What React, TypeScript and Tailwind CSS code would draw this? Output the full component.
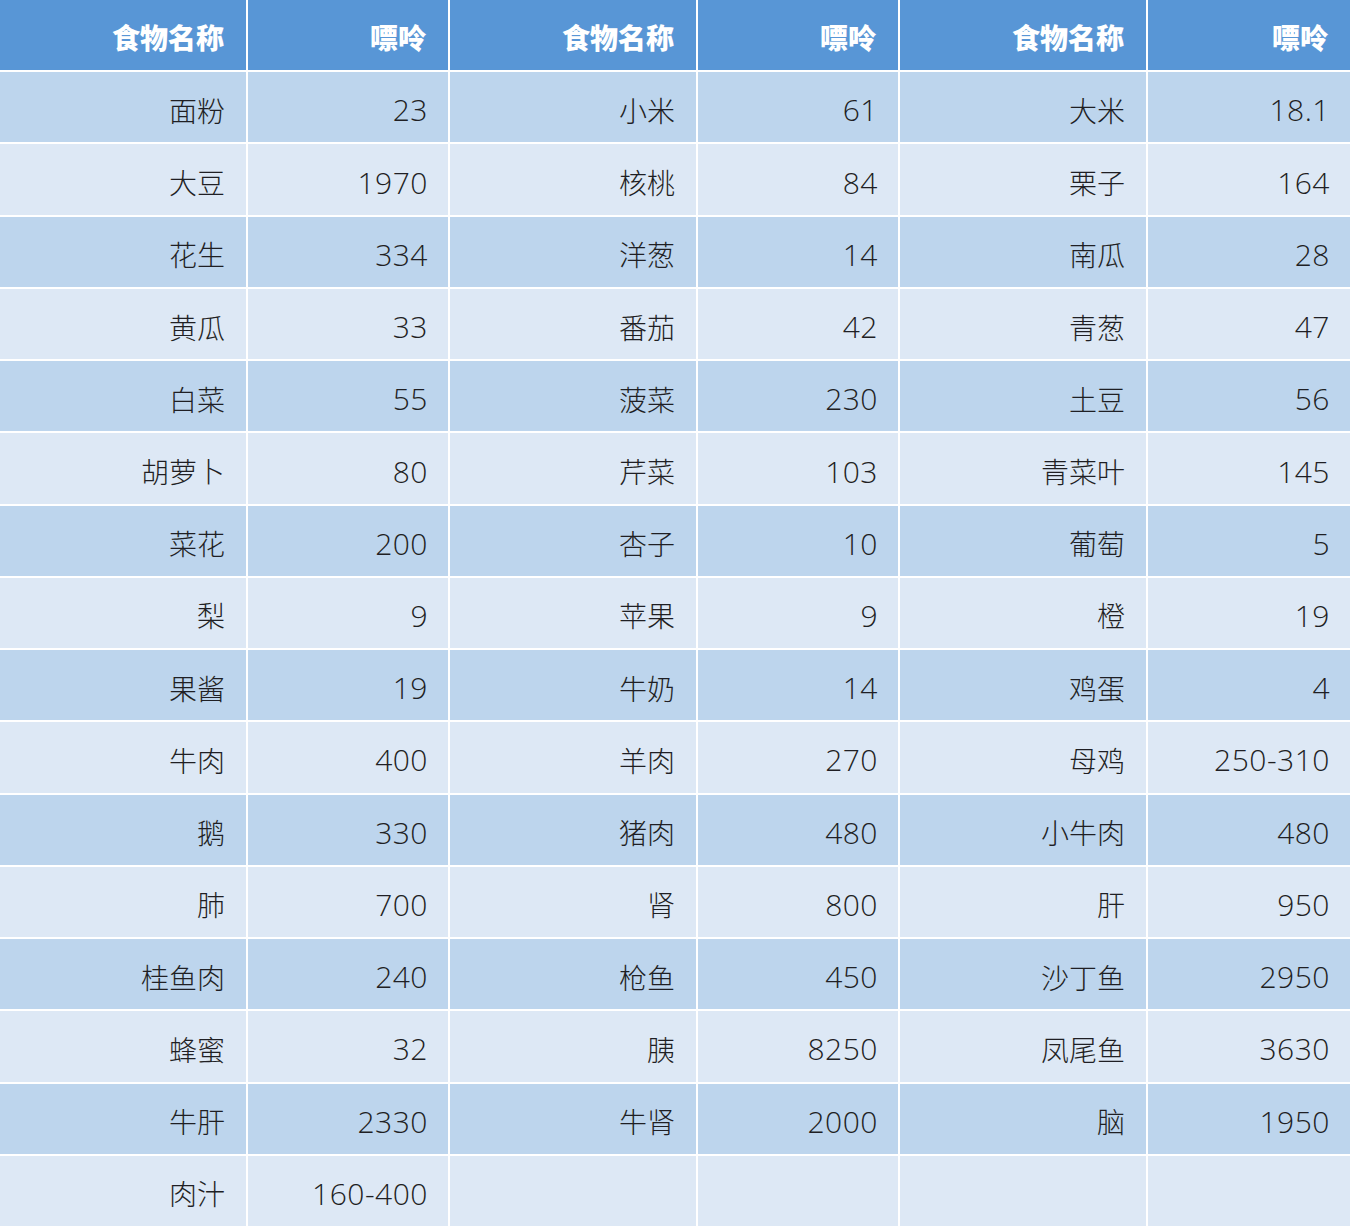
const rows: string[][] = [
  ['面粉', '23', '小米', '61', '大米', '18.1'],
  ['大豆', '1970', '核桃', '84', '栗子', '164'],
  ['花生', '334', '洋葱', '14', '南瓜', '28'],
  ['黄瓜', '33', '番茄', '42', '青葱', '47'],
  ['白菜', '55', '菠菜', '230', '土豆', '56'],
  ['胡萝卜', '80', '芹菜', '103', '青菜叶', '145'],
  ['菜花', '200', '杏子', '10', '葡萄', '5'],
  ['梨', '9', '苹果', '9', '橙', '19'],
  ['果酱', '19', '牛奶', '14', '鸡蛋', '4'],
  ['牛肉', '400', '羊肉', '270', '母鸡', '250-310'],
  ['鹅', '330', '猪肉', '480', '小牛肉', '480'],
  ['肺', '700', '肾', '800', '肝', '950'],
  ['桂鱼肉', '240', '枪鱼', '450', '沙丁鱼', '2950'],
  ['蜂蜜', '32', '胰', '8250', '凤尾鱼', '3630'],
  ['牛肝', '2330', '牛肾', '2000', '脑', '1950'],
  ['肉汁', '160-400', '', '', '', ''],
]

const headers = ['食物名称', '嘌呤', '食物名称', '嘌呤', '食物名称', '嘌呤']

export default function App() {
  return (
    <div className="grid h-[1226px] w-[1350px] grid-cols-[246px_200px_246px_200px_246px_202px] grid-rows-[repeat(17,1fr)] gap-[2px] bg-white">
      {headers.map((h, i) => (
        <div
          key={'h' + i}
          className="flex items-center justify-end bg-[#5896d6] pr-[22px] pt-[4px] font-['Noto_Sans_CJK_SC',sans-serif] text-[28px] font-black text-white"
        >
          {h}
        </div>
      ))}
      {rows.map((r, ri) =>
        r.map((c, ci) => (
          <div
            key={ri + '-' + ci}
            className={`flex items-center justify-end pt-[5px] font-light text-[#1f1f24] ${
              ri % 2 === 0 ? 'bg-[#bdd5ed]' : 'bg-[#dde8f5]'
            } ${
              ci % 2 === 0
                ? "pr-[21px] font-['Noto_Sans_CJK_SC',sans-serif] text-[28px]"
                : "pr-[20px] font-['Open_Sans','Noto_Sans_CJK_SC',sans-serif] text-[30px] tracking-[0.5px]"
            }`}
          >
            {c}
          </div>
        ))
      )}
    </div>
  )
}
